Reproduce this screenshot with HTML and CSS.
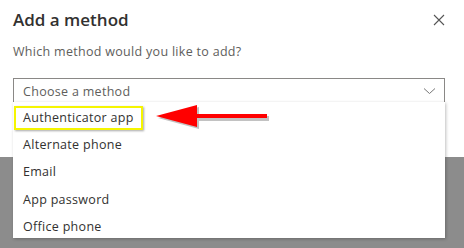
FILE: index.html
```html
<!DOCTYPE html>
<html>
<head>
<meta charset="utf-8">
<link rel="stylesheet" href="styles.css">
</head>
<body>
<div class="dialog">
  <div class="header">
    <h1 class="title">Add a method</h1>
    <svg class="close" width="12" height="12" viewBox="0 0 12 12"><path d="M1 1L11 11M11 1L1 11" stroke="#555" stroke-width="1.1" fill="none"/></svg>
  </div>
  <p class="question">Which method would you like to add?</p>
  <div class="select">
    <span class="placeholder">Choose a method</span>
    <svg class="chevron" width="13" height="8" viewBox="0 0 13 8"><path d="M1 1.5L6.5 6.5L12 1.5" stroke="#777" stroke-width="1" fill="none"/></svg>
  </div>
</div>
<ul class="options">
  <li class="option"><span class="highlight">Authenticator app</span></li>
  <li class="option">Alternate phone</li>
  <li class="option">Email</li>
  <li class="option">App password</li>
  <li class="option">Office phone</li>
</ul>
<svg class="arrow" width="116" height="26" viewBox="0 0 116 26">
  <g transform="translate(2,2)">
    <path d="M0 11L41 0L41 9L111 9L111 14L41 14L41 22Z" fill="#999" opacity="0.6"/>
  </g>
  <path d="M0 11L41 0L41 9L111 9L111 13L41 13L41 22Z" fill="#ff0000"/>
</svg>
</body>
</html>
```
FILE: styles.css
```css
html, body {
  margin: 0;
  padding: 0;
}
body {
  width: 464px;
  height: 248px;
  background: #8c8c8c;
  font-family: "Open Sans", "Noto Sans", sans-serif;
  color: #323130;
  position: relative;
  overflow: hidden;
}
.dialog {
  background: #fff;
  height: 157px;
  padding: 0 19px 0 13px;
  box-sizing: border-box;
}
.header {
  display: flex;
  justify-content: space-between;
  align-items: center;
  padding-top: 7px;
  height: 26px;
}
.title {
  margin: 0;
  font-size: 17px;
  font-weight: 600;
  line-height: 26px;
  color: #323130;
  letter-spacing: 0;
}
.question {
  margin: 10px 0 0;
  font-size: 12.5px;
  line-height: 18px;
  color: #605e5c;
  letter-spacing: 0.3px;
}
.select {
  margin-top: 17px;
  height: 24px;
  border: 1px solid #8a8886;
  display: flex;
  align-items: center;
  justify-content: space-between;
  padding: 0 8px 0 9px;
}
.placeholder {
  font-size: 12.5px;
  color: #605e5c;
  letter-spacing: 0.3px;
}
.options {
  position: absolute;
  left: 13px;
  top: 102px;
  width: 432px;
  height: 136px;
  margin: 0;
  padding: 2px 0 0;
  box-sizing: border-box;
  list-style: none;
  background: #fff;
  box-shadow: 1px 1px 3px rgba(0,0,0,0.25);
}
.option {
  height: 27.2px;
  display: flex;
  align-items: center;
  padding-left: 10px;
  font-size: 12.5px;
  color: #323130;
  letter-spacing: 0.3px;
}
.option:first-child {
  padding-left: 1px;
}
.highlight {
  display: inline-block;
  border: 2px solid #f5f500;
  padding: 0 7px 0 7px;
  line-height: 20px;
  box-shadow: 1px 1px 2px rgba(0,0,0,0.35);
}
.arrow {
  position: absolute;
  left: 156px;
  top: 105px;
}
```
